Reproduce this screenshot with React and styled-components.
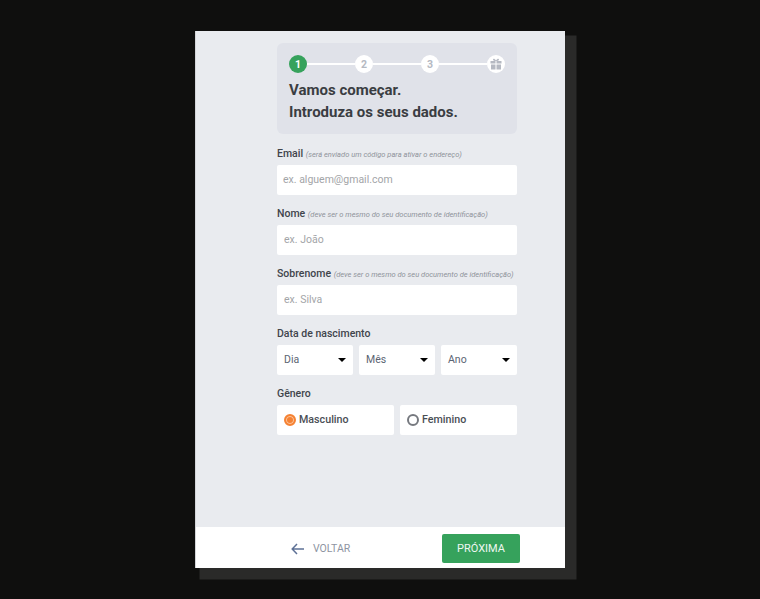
import React from "react";
import styled, { createGlobalStyle } from "styled-components";

const GlobalStyle = createGlobalStyle`
  html, body {
    margin: 0;
    padding: 0;
    background: #0f0f0e;
    font-family: Roboto, "Liberation Sans", sans-serif;
  }
  * {
    box-sizing: border-box;
  }
`;

const Page = styled.div`
  width: 760px;
  height: 599px;
  padding: 31px 0 0 195px;
  overflow: hidden;
`;

const Card = styled.div`
  width: 370px;
  height: 537px;
  display: flex;
  flex-direction: column;
  background: #e9ebef;
  border-left: 1px solid #d4d5d8;
  box-shadow: 8px 8px 0 3.5px #2a2a29;
`;

const Content = styled.div`
  flex: 1;
  padding: 12px 48px 0 81px;
`;

const StepBox = styled.div`
  height: 91px;
  padding: 12px 12px 0;
  background: #e0e2e9;
  border-radius: 6px;
`;

const Stepper = styled.div`
  display: flex;
  align-items: center;
`;

const Step = styled.span`
  width: 18px;
  height: 18px;
  flex: none;
  display: flex;
  align-items: center;
  justify-content: center;
  border-radius: 50%;
  font-size: 10.5px;
  font-weight: 700;
  background: ${({ $active }) => ($active ? "#36a25c" : "#fff")};
  color: ${({ $active }) => ($active ? "#fff" : "#b5b9c2")};
`;

const StepLine = styled.span`
  flex: 1;
  height: 2px;
  background: #fff;
`;

const Title = styled.div`
  margin-top: 6px;
  font-size: 15px;
  font-weight: 700;
  line-height: 22px;
  color: #3a3d42;
`;

const Field = styled.div`
  margin-top: ${({ $first }) => ($first ? "11.5px" : "0")};
  height: 60px;
`;

const Label = styled.div`
  height: 19px;
  font-size: 10.5px;
  font-weight: 500;
  line-height: 16px;
  white-space: nowrap;
  color: #40444b;
`;

const Hint = styled.em`
  font-size: 7.5px;
  font-weight: 400;
  color: #8f939b;
`;

const TextInput = styled.input`
  display: block;
  width: 100%;
  height: 30px;
  padding: 0 ${({ $inset }) => $inset}px;
  border: 0;
  border-radius: 2px;
  background: #fff;
  font-family: inherit;
  font-size: 10.5px;
  outline: none;
  &::placeholder {
    color: #a3a5a8;
    opacity: 1;
  }
`;

const Row = styled.div`
  display: flex;
  gap: 6px;
`;

const SelectBox = styled.div`
  flex: 1;
  height: 30px;
  padding: 0 7px;
  display: flex;
  align-items: center;
  justify-content: space-between;
  background: #fff;
  border-radius: 2px;
  font-size: 10.5px;
  color: #5b6472;
`;

const Caret = styled.span`
  width: 0;
  height: 0;
  border-left: 4px solid transparent;
  border-right: 4px solid transparent;
  border-top: 4px solid #000;
`;

const RadioBox = styled.label`
  flex: 1;
  height: 30px;
  padding-left: 7px;
  display: flex;
  align-items: center;
  gap: 3px;
  background: #fff;
  border-radius: 2px;
  font-size: 10.7px;
  font-weight: 500;
  color: #4a4e55;
`;

const RadioMark = styled.span`
  width: 12px;
  height: 12px;
  flex: none;
  border-radius: 50%;
  border: 2px solid ${({ $checked }) => ($checked ? "#f58233" : "#76797f")};
  background: ${({ $checked }) => ($checked ? "#f58233" : "#fff")};
  box-shadow: ${({ $checked }) => ($checked ? "inset 0 0 0 1px #fbc49c" : "none")};
`;

const Footer = styled.div`
  height: 41px;
  flex: none;
  padding: 7px 45px 5px 95px;
  display: flex;
  align-items: center;
  justify-content: space-between;
  background: #fff;
`;

const BackLink = styled.div`
  display: flex;
  align-items: center;
  gap: 9px;
  font-size: 10.5px;
  font-weight: 400;
  color: #8d94a2;
`;

const NextButton = styled.button`
  width: 78px;
  height: 29px;
  border: 0;
  border-radius: 2px;
  background: #36a25c;
  color: #eef7f1;
  font-family: inherit;
  font-size: 11px;
  font-weight: 400;
`;

const GiftIcon = () => (
  <svg width="12" height="12" viewBox="0 0 12 12" fill="#b5b9c2">
    <rect x="0.5" y="3" width="5" height="2.5" />
    <rect x="6.5" y="3" width="5" height="2.5" />
    <rect x="1" y="6.5" width="4.5" height="5" />
    <rect x="6.5" y="6.5" width="4.5" height="5" />
    <path d="M6 3C4.5 3 3 2.4 3 1.4 3 .4 4.6.2 6 2.4 7.4.2 9 .4 9 1.4 9 2.4 7.5 3 6 3Z" />
  </svg>
);

const BackArrow = () => (
  <svg width="13" height="12" viewBox="0 0 13 12" fill="none" stroke="#5e7196" strokeWidth="1.5">
    <path d="M13 6H1.2M6 1 1.2 6 6 11" />
  </svg>
);

const fields = [
  { label: "Email", hint: "(será enviado um código para ativar o endereço)", placeholder: "ex. alguem@gmail.com", inset: 6 },
  { label: "Nome", hint: "(deve ser o mesmo do seu documento de identificação)", placeholder: "ex. João", inset: 7 },
  { label: "Sobrenome", hint: "(deve ser o mesmo do seu documento de identificação)", placeholder: "ex. Silva", inset: 7 },
];

const App = () => {
  return (
    <Page>
      <GlobalStyle />
      <Card>
        <Content>
          <StepBox>
            <Stepper>
              <Step $active>1</Step>
              <StepLine />
              <Step>2</Step>
              <StepLine />
              <Step>3</Step>
              <StepLine />
              <Step>
                <GiftIcon />
              </Step>
            </Stepper>
            <Title>
              Vamos começar.
              <br />
              Introduza os seus dados.
            </Title>
          </StepBox>

          {fields.map((f, i) => (
            <Field key={f.label} $first={i === 0}>
              <Label>
                {f.label} <Hint>{f.hint}</Hint>
              </Label>
              <TextInput placeholder={f.placeholder} $inset={f.inset} />
            </Field>
          ))}

          <Field>
            <Label>Data de nascimento</Label>
            <Row>
              {["Dia", "Mês", "Ano"].map((o) => (
                <SelectBox key={o}>
                  {o}
                  <Caret />
                </SelectBox>
              ))}
            </Row>
          </Field>

          <Field>
            <Label>Gênero</Label>
            <Row>
              <RadioBox>
                <RadioMark $checked />
                Masculino
              </RadioBox>
              <RadioBox>
                <RadioMark />
                Feminino
              </RadioBox>
            </Row>
          </Field>
        </Content>
        <Footer>
          <BackLink>
            <BackArrow />
            VOLTAR
          </BackLink>
          <NextButton>PRÓXIMA</NextButton>
        </Footer>
      </Card>
    </Page>
  );
};

export default App;
